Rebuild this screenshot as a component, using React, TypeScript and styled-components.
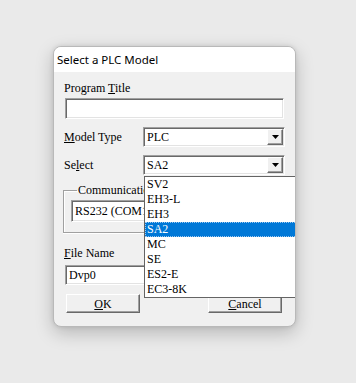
import React from "react";
import styled, { createGlobalStyle } from "styled-components";

const Global = createGlobalStyle`
  html, body { margin: 0; padding: 0; background: #eaeaea; }
  body { width: 356px; height: 383px; overflow: hidden; }
`;

const Page = styled.div`
  padding: 46px 0 0 53px;
`;

const Dialog = styled.div`
  width: 243px;
  height: 281px;
  box-sizing: border-box;
  border: 1px solid #b9b9b9;
  border-radius: 8px;
  background: #f0f0f0;
  box-shadow: 0 6px 18px rgba(0, 0, 0, 0.22), 0 0 4px rgba(0, 0, 0, 0.1);
  overflow: hidden;
  display: flex;
  flex-direction: column;
`;

const TitleBar = styled.div`
  height: 25px;
  background: #ffffff;
  display: flex;
  align-items: center;
  padding-left: 3px;
  font-family: "Noto Sans", "Open Sans", sans-serif;
  font-size: 11.5px;
  color: #000;
`;

const Body = styled.div`
  position: relative;
  flex: 1;
  display: flex;
  flex-direction: column;
  padding: 9px 0 0 9px;
  font-family: "Liberation Serif", "Times New Roman", serif;
  font-size: 12px;
  color: #000;
`;

const Label = styled.div<{ $mt?: number; $w?: number }>`
  height: 14px;
  line-height: 14px;
  margin-top: ${(p) => p.$mt ?? 0}px;
  margin-left: 1px;
  width: ${(p) => (p.$w ? `${p.$w}px` : "auto")};
  flex: none;
`;

const Key = styled.span`
  text-decoration: underline;
  text-underline-offset: 1px;
`;

const Sunken = styled.div<{ $w: number; $h: number; $mt?: number; $ml?: number }>`
  box-sizing: border-box;
  width: ${(p) => p.$w}px;
  height: ${(p) => p.$h}px;
  margin-top: ${(p) => p.$mt ?? 0}px;
  margin-left: ${(p) => p.$ml ?? 0}px;
  background: #fff;
  border-top: 1px solid #a0a0a0;
  border-left: 1px solid #a0a0a0;
  border-right: 1px solid #ffffff;
  border-bottom: 1px solid #ffffff;
  box-shadow: inset 1px 1px 0 #696969, inset -1px -1px 0 #e3e3e3;
  display: flex;
  align-items: center;
  padding-left: 3px;
  flex: none;
`;

const Row = styled.div<{ $mt: number }>`
  display: flex;
  align-items: center;
  margin-top: ${(p) => p.$mt}px;
  height: 20px;
`;

const ComboText = styled.span`
  flex: 1;
`;

const ArrowBtn = styled.div`
  box-sizing: border-box;
  width: 16px;
  height: 16px;
  margin-right: 1px;
  background: #f0f0f0;
  border-top: 1px solid #fff;
  border-left: 1px solid #fff;
  border-right: 1px solid #696969;
  border-bottom: 1px solid #696969;
  box-shadow: inset -1px -1px 0 #a0a0a0;
  display: flex;
  align-items: center;
  justify-content: center;
`;

const Group = styled.fieldset`
  margin: 8px 0 0 0;
  width: 222px;
  height: 50px;
  box-sizing: border-box;
  padding: 3px 0 0 7px;
  border: none;
  border-top: 1px solid #a0a0a0;
  border-left: 1px solid #a0a0a0;
  border-bottom: 1px solid #a0a0a0;
  box-shadow: inset 1px 1px 0 #fff, 0 1px 0 #fff;
  position: relative;
`;

const Legend = styled.legend`
  padding: 0 1px;
  margin-left: 6px;
  height: 14px;
  line-height: 14px;
  font-size: 12px;
`;

const ButtonRow = styled.div`
  display: flex;
  justify-content: space-between;
  margin-top: 9px;
  width: 216px;
  margin-left: 3px;
`;

const Button = styled.div`
  box-sizing: border-box;
  width: 74px;
  height: 19px;
  background: #f0f0f0;
  border-top: 1px solid #fff;
  border-left: 1px solid #fff;
  border-right: 1px solid #696969;
  border-bottom: 1px solid #696969;
  box-shadow: inset -1px -1px 0 #a0a0a0;
  display: flex;
  align-items: center;
  justify-content: center;
  line-height: 14px;
`;

const DropList = styled.div`
  position: absolute;
  left: 90px;
  top: 104px;
  width: 169px;
  height: 122px;
  box-sizing: border-box;
  border: 1px solid #646464;
  background: #fff;
  display: flex;
  z-index: 5;
`;

const Items = styled.div`
  width: 152px;
  display: flex;
  flex-direction: column;
`;

const Item = styled.div<{ $sel?: boolean }>`
  height: 15px;
  line-height: 14px;
  padding-left: 2px;
  box-sizing: border-box;
  background: ${(p) => (p.$sel ? "#0078d7" : "transparent")};
  color: ${(p) => (p.$sel ? "#fff" : "#000")};
  outline: ${(p) => (p.$sel ? "1px dotted #9cc8f0" : "none")};
  outline-offset: -1px;
`;

const ScrollTrack = styled.div`
  flex: 1;
  background: #f0f0f0;
  display: flex;
  justify-content: center;
  padding-top: 72px;
`;

const Thumb = styled.div`
  width: 2px;
  height: 30px;
  border-radius: 1px;
  background: #8a8a8a;
`;

const Arrow = () => (
  <svg width="7" height="4" viewBox="0 0 7 4">
    <path d="M0 0h7L3.5 4z" fill="#000" />
  </svg>
);

const items = ["SV2", "EH3-L", "EH3", "SA2", "MC", "SE", "ES2-E", "EC3-8K"];

export default function App() {
  return (
    <>
      <Global />
      <Page>
        <Dialog>
          <TitleBar>Select a PLC Model</TitleBar>
          <Body>
            <Label>
              Program <Key>T</Key>itle
            </Label>
            <Sunken $w={219} $h={21} $mt={3} $ml={2} />
            <Row $mt={8}>
              <Label $w={79}>
                <Key>M</Key>odel Type
              </Label>
              <Sunken $w={142} $h={20}>
                <ComboText>PLC</ComboText>
                <ArrowBtn>
                  <Arrow />
                </ArrowBtn>
              </Sunken>
            </Row>
            <Row $mt={8}>
              <Label $w={79}>
                Se<Key>l</Key>ect
              </Label>
              <Sunken $w={142} $h={20}>
                <ComboText>SA2</ComboText>
                <ArrowBtn>
                  <Arrow />
                </ArrowBtn>
              </Sunken>
            </Row>
            <Group>
              <Legend>Communication Port</Legend>
              <Sunken $w={200} $h={22}>
                <ComboText>RS232 (COM1)</ComboText>
              </Sunken>
            </Group>
            <Label $mt={13}>
              <Key>F</Key>ile Name
            </Label>
            <Sunken $w={219} $h={20} $mt={5} $ml={2}>
              Dvp0
            </Sunken>
            <ButtonRow>
              <Button>
                <span>
                  <Key>O</Key>K
                </span>
              </Button>
              <Button>
                <span>
                  <Key>C</Key>ancel
                </span>
              </Button>
            </ButtonRow>
            <DropList>
              <Items>
                {items.map((it) => (
                  <Item key={it} $sel={it === "SA2"}>
                    {it}
                  </Item>
                ))}
              </Items>
              <ScrollTrack>
                <Thumb />
              </ScrollTrack>
            </DropList>
          </Body>
        </Dialog>
      </Page>
    </>
  );
}
